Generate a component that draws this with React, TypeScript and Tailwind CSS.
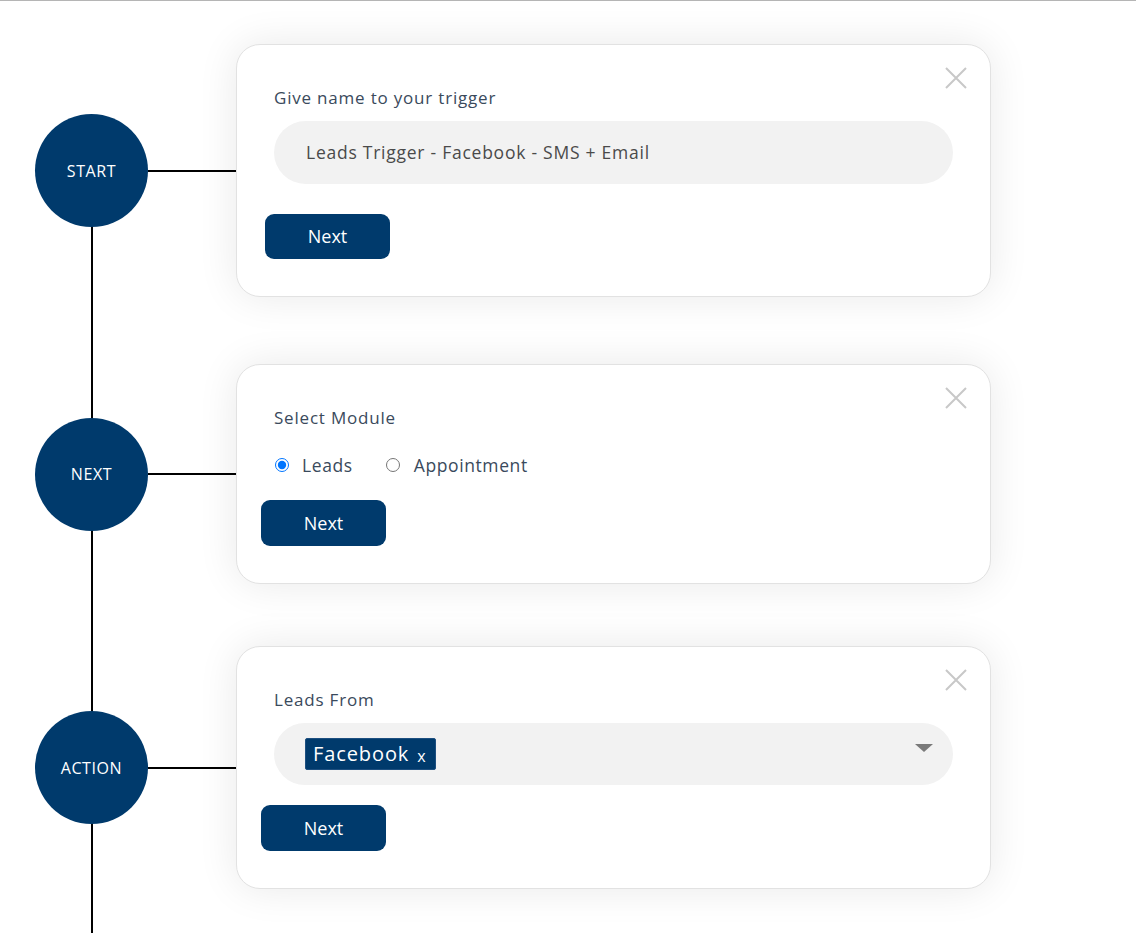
import type { ReactNode } from "react";

type StepRowProps = {
  label: string;
  className?: string;
  children: ReactNode;
};

function CloseIcon() {
  return (
    <svg
      width="22"
      height="22"
      viewBox="0 0 22 22"
      className="absolute right-[23px] top-[22px]"
    >
      <path d="M1 1L21 21M21 1L1 21" stroke="#c8c8c8" strokeWidth="2" fill="none" />
    </svg>
  );
}

function NextButton({ className = "" }: { className?: string }) {
  return (
    <button
      type="button"
      className={`flex h-[45px] w-[125px] items-center justify-center rounded-[9px] bg-[#003a6c] text-[18px] font-medium text-white ${className}`}
    >
      Next
    </button>
  );
}

function StepRow({ label, className = "", children }: StepRowProps) {
  return (
    <div className={`flex items-center ${className}`}>
      <div className="relative z-10 ml-[35px] flex h-[113px] w-[113px] shrink-0 items-center justify-center rounded-full bg-[#003a6c] text-[16px] tracking-[0.6px] text-white">
        {label}
      </div>
      <div className="h-[2px] w-[88px] shrink-0 bg-black" />
      <div className="relative w-[755px] shrink-0 rounded-[24px] border border-[#e2e2e2] bg-white px-[37px] pb-[37px] pt-[41px] shadow-[0_0_40px_rgba(0,0,0,0.09)]">
        <CloseIcon />
        {children}
      </div>
    </div>
  );
}

export default function App() {
  return (
    <div className="min-h-screen border-t border-[#b5b5b5] bg-white font-['Open_Sans',sans-serif]">
      <div className="relative pb-[60px] pt-[43px]">
        <div className="absolute bottom-0 left-[91px] top-[169px] w-[2px] bg-black" />

        <StepRow label="START">
          <p className="text-[17px] leading-6 tracking-[0.8px] text-[#3a4a5c]">
            Give name to your trigger
          </p>
          <div className="mt-[11px] flex h-[63px] items-center rounded-full bg-[#f2f2f2] pl-[32px] text-[17.5px] tracking-[0.75px] text-[#4a4a4a]">
            Leads Trigger - Facebook - SMS + Email
          </div>
          <NextButton className="-ml-[9px] mt-[30px]" />
        </StepRow>

        <StepRow label="NEXT" className="mt-[67px]">
          <p className="text-[17px] leading-6 tracking-[0.8px] text-[#3a4a5c]">
            Select Module
          </p>
          <div className="mt-[23px] flex h-6 items-center text-[17.5px] tracking-[0.6px] text-[#3a4a5c]">
            <label className="flex items-center">
              <input
                type="radio"
                name="module"
                defaultChecked
                className="ml-px h-[14px] w-[14px] accent-[#0075ff]"
              />
              <span className="ml-[13px]">Leads</span>
            </label>
            <label className="ml-[33px] flex items-center">
              <input
                type="radio"
                name="module"
                className="h-[14px] w-[14px] accent-[#0075ff]"
              />
              <span className="ml-[14px]">Appointment</span>
            </label>
          </div>
          <NextButton className="-ml-[13px] mt-[23px] h-[46px]" />
        </StepRow>

        <StepRow label="ACTION" className="mt-[62px]">
          <p className="text-[17px] leading-6 tracking-[0.8px] text-[#3a4a5c]">
            Leads From
          </p>
          <div className="relative mt-[11px] flex h-[62px] items-center rounded-full bg-[#f2f2f2] pl-[31px]">
            <span className="flex h-[32px] items-center rounded-[2px] border border-[#1d4f80] bg-[#003a6c] pl-[7px] pr-[8px] text-[20px] tracking-[0.9px] text-white">
              Facebook
              <span className="ml-[8px] mt-[4px] text-[16px]">x</span>
            </span>
            <span className="absolute right-[20px] top-[21px] h-0 w-0 border-x-[9px] border-t-[8px] border-x-transparent border-t-[#7a7a7a]" />
          </div>
          <NextButton className="-ml-[13px] mt-[20px] h-[46px]" />
        </StepRow>
      </div>
    </div>
  );
}
